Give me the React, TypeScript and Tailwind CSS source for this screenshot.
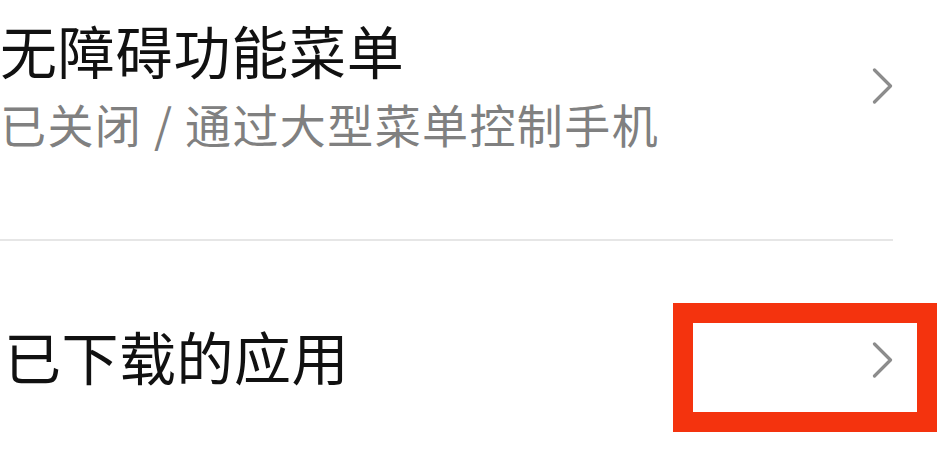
import React from "react";

function Chevron() {
  return (
    <svg width="21" height="36" viewBox="0 0 21 36" fill="none" className="shrink-0">
      <polyline
        points="2.5,2 18.5,18 2.5,34"
        stroke="#8c8c8c"
        strokeWidth="3.2"
        strokeLinecap="round"
        strokeLinejoin="round"
      />
    </svg>
  );
}

export default function App() {
  return (
    <div
      className="relative w-full h-[460px] overflow-hidden bg-white"
      style={{ fontFamily: '"Noto Sans CJK SC", "Noto Sans", sans-serif' }}
    >
      <div className="pr-[54px]">
        {/* row 1 */}
        <div className="flex items-start justify-between h-[239px] pt-[15px]">
          <div>
            <div className="text-[57px] leading-[68px] tracking-[0.8px] text-[#111]">无障碍功能菜单</div>
            <div className="mt-[12px] text-[46px] leading-[56px] tracking-[1.4px] text-[#808080]">
              已关闭 / 通过大型菜单控制手机
            </div>
          </div>
          <div className="mt-[53px]">
            <Chevron />
          </div>
        </div>
        <div className="h-[2px] bg-[#e6e6e6]" />
        {/* row 2 */}
        <div className="flex items-start justify-between pt-[80px]">
          <div className="text-[57px] leading-[68px] tracking-[0.5px] text-[#111] pl-[4px]">已下载的应用</div>
          <div className="mt-[21px]">
            <Chevron />
          </div>
        </div>
      </div>
      {/* annotation box */}
      <div className="absolute left-[673px] top-[303px] w-[264px] h-[129px] border-[20px] border-[#f4330e]" />
    </div>
  );
}
